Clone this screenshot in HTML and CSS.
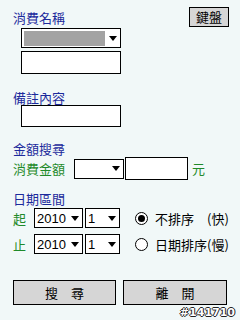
FILE: index.html
```html
<!DOCTYPE html>
<html lang="zh-Hant">
<head>
    <meta charset="utf-8">
    <title>消費查詢</title>
    <link rel="stylesheet" href="styles.css">
</head>
<body>
    <div class="page">
        <div class="head">
            <span class="lbl blue">消費名稱</span>
            <button class="btn kbd">鍵盤</button>
        </div>
        <div class="indent">
            <div class="sel wide"><span class="fill"></span><i class="arr"></i></div>
            <div class="box wide tall"></div>
        </div>

        <div class="lbl blue sec">備註內容</div>
        <div class="indent">
            <div class="box wide memo"></div>
        </div>

        <div class="lbl blue sec asec">金額搜尋</div>
        <div class="amt">
            <span class="lbl green">消費金額</span>
            <div class="sel mid"><span></span><i class="arr"></i></div>
            <div class="box num"></div>
            <span class="green unit">元</span>
        </div>

        <div class="lbl blue sec dsec">日期區間</div>
        <div class="drow first">
            <span class="green">起</span>
            <div class="sel yr"><span>2010</span><i class="arr"></i></div>
            <div class="sel mo"><span>1</span><i class="arr"></i></div>
            <label class="radio"><span class="dot on"></span>不排序　(快)</label>
        </div>
        <div class="drow">
            <span class="green">止</span>
            <div class="sel yr"><span>2010</span><i class="arr"></i></div>
            <div class="sel mo"><span>1</span><i class="arr"></i></div>
            <label class="radio"><span class="dot"></span>日期排序(慢)</label>
        </div>

        <div class="actions">
            <button class="btn big">搜　尋</button>
            <button class="btn big">離　開</button>
        </div>
        <div class="code">#141710</div>
    </div>
</body>
</html>
```
FILE: styles.css
```css
body {
    margin: 0;
    background-color: #f1f8f8;
    font-family: "Noto Sans CJK TC", "Liberation Sans", sans-serif;
    font-size: 13px;
    color: #000;
}
.page {
    padding: 7px 13px 0 13px;
}
.lbl {
    line-height: 15px;
}
.blue {
    color: #1c2a9c;
}
.green {
    color: #1f8a2a;
}
.head {
    display: flex;
    justify-content: space-between;
    align-items: center;
    height: 20px;
}
.btn {
    font-family: "Noto Sans CJK TC", sans-serif;
    font-size: 13px;
    background: #d6d6d6;
    border: 1px solid #000;
    padding: 0;
    color: #000;
}
.kbd {
    width: 40px;
    height: 20px;
    margin-right: -2px;
    line-height: 16px;
}
.indent {
    padding-left: 8px;
}
.sel {
    display: flex;
    justify-content: space-between;
    align-items: center;
    flex-shrink: 0;
    box-sizing: border-box;
    height: 20px;
    border: 1px solid #000;
    background: #fff;
    padding: 0 3px 0 2px;
    font-family: "Liberation Sans", sans-serif;
    font-size: 13px;
}
.arr {
    width: 0;
    height: 0;
    border-left: 4px solid transparent;
    border-right: 4px solid transparent;
    border-top: 5px solid #000;
}
.wide {
    width: 100px;
}
.sel.wide {
    margin-top: 1px;
    height: 20px;
    padding-left: 2px;
}
.fill {
    width: 81px;
    height: 15px;
    background: #a3a3a3;
}
.box {
    box-sizing: border-box;
    flex-shrink: 0;
    border: 1px solid #000;
    background: #fff;
}
.tall {
    height: 23px;
    margin-top: 3px;
}
.sec {
    margin-top: 16px;
}
.asec {
    margin-top: 14px;
}
.memo {
    height: 22px;
}
.sec + .amt {
    margin-top: 1px;
}
.amt {
    display: flex;
    align-items: center;
    height: 23px;
}
.amt .sel {
    margin-left: 9px;
}
.mid {
    width: 50px;
}
.num {
    width: 63px;
    height: 23px;
    margin-left: 1px;
}
.unit {
    margin-left: 4px;
}
.dsec {
    margin-top: 11px;
}
.drow {
    display: flex;
    align-items: center;
    height: 20px;
    margin-top: 6px;
    margin-right: -13px;
}
.drow.first {
    margin-top: 2px;
}
.drow .green {
    width: 21px;
    flex-shrink: 0;
}
.yr {
    width: 49px;
}
.mo {
    width: 35px;
    margin-left: 2px;
}
.radio {
    display: flex;
    align-items: center;
    flex-shrink: 0;
    white-space: nowrap;
    margin-left: 15px;
}
.dot {
    box-sizing: border-box;
    width: 13px;
    height: 13px;
    border: 1px solid #000;
    border-radius: 50%;
    background: #fff;
    margin-right: 7px;
    display: flex;
    align-items: center;
    justify-content: center;
}
.dot.on::after {
    content: "";
    width: 7px;
    height: 7px;
    border-radius: 50%;
    background: #000;
}
.actions {
    display: flex;
    gap: 7px;
    margin-top: 26px;
}
.big {
    width: 103px;
    height: 25px;
}
.big + .big {
    width: 104px;
}
.code {
    text-align: right;
    margin-right: -8px;
    margin-top: 2px;
    font-family: "DejaVu Sans", sans-serif;
    font-weight: bold;
    font-size: 11px;
    line-height: 11px;
    color: #fff;
    text-shadow: 1px 0 #222, -1px 0 #222, 0 1px #222, 0 -1px #222;
}
```
